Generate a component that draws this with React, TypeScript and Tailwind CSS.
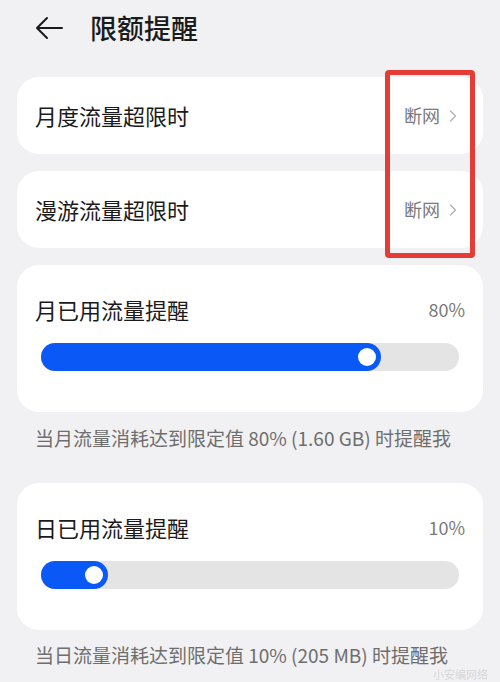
import { ChevronRight } from "lucide-react";

const font = {
  fontFamily: '"Noto Sans CJK SC", "Noto Sans", sans-serif',
};

function LinkRow({ label, value }: { label: string; value: string }) {
  return (
    <div className="flex h-[77px] items-center justify-between rounded-[22px] bg-white pl-[18px] pr-[20px]">
      <span className="text-[22px] text-[#1b1b1b]">{label}</span>
      <span className="flex items-center gap-[3px] text-[18px] text-[#7a7a7a]">
        {value}
        <ChevronRight className="h-[20px] w-[20px] text-[#b0b0b0]" strokeWidth={1.5} />
      </span>
    </div>
  );
}

function SliderCard({ title, pct, fill }: { title: string; pct: string; fill: number }) {
  return (
    <div className="h-[147px] rounded-[22px] bg-white px-[18px] pt-[29px]">
      <div className="flex items-center justify-between">
        <span className="text-[22px] leading-[30px] text-[#1b1b1b]">{title}</span>
        <span className="text-[18px] text-[#7a7a7a]">{pct}</span>
      </div>
      <div className="mx-[6px] mt-[19px] h-[28px] rounded-full bg-[#e4e4e4]">
        <div
          className="flex h-full items-center justify-end rounded-full bg-[#0a59f7] pr-[5px]"
          style={{ width: `${fill}px` }}
        >
          <div className="h-[18px] w-[18px] rounded-full bg-white" />
        </div>
      </div>
    </div>
  );
}

export default function App() {
  return (
    <div className="relative h-[682px] w-[500px] overflow-hidden bg-[#f1f1f3]" style={font}>
      <div className="flex h-[56px] items-center pl-[34px]">
        <svg width="30" height="24" viewBox="0 0 30 24" fill="none">
          <path
            d="M28 12H3M13 2L3 12l10 10"
            stroke="#1b1b1b"
            strokeWidth="2"
            strokeLinecap="round"
            strokeLinejoin="round"
          />
        </svg>
        <span className="ml-[26px] text-[27px] font-medium text-[#1b1b1b]">限额提醒</span>
      </div>

      <div className="flex flex-col gap-[17px] px-[17px] pt-[21px]">
        <LinkRow label="月度流量超限时" value="断网" />
        <LinkRow label="漫游流量超限时" value="断网" />
      </div>

      <div className="px-[17px] pt-[17px]">
        <SliderCard title="月已用流量提醒" pct="80%" fill={340} />
        <p className="px-[18px] pt-[12px] text-[19px] leading-[28px] text-[#6e6e6e]">
          当月流量消耗达到限定值 80% (1.60 GB) 时提醒我
        </p>
      </div>

      <div className="px-[17px] pt-[31px]">
        <SliderCard title="日已用流量提醒" pct="10%" fill={67} />
        <p className="px-[18px] pt-[11px] text-[19px] leading-[28px] text-[#6e6e6e]">
          当日流量消耗达到限定值 10% (205 MB) 时提醒我
        </p>
      </div>

      <div className="absolute left-[385px] top-[70px] h-[188px] w-[90px] rounded-[4px] border-[5px] border-[#e53c35]" />

      <span className="absolute bottom-[1px] right-[12px] text-[11px] leading-[14px] text-[#d6d6da]">小安编网络</span>
    </div>
  );
}
